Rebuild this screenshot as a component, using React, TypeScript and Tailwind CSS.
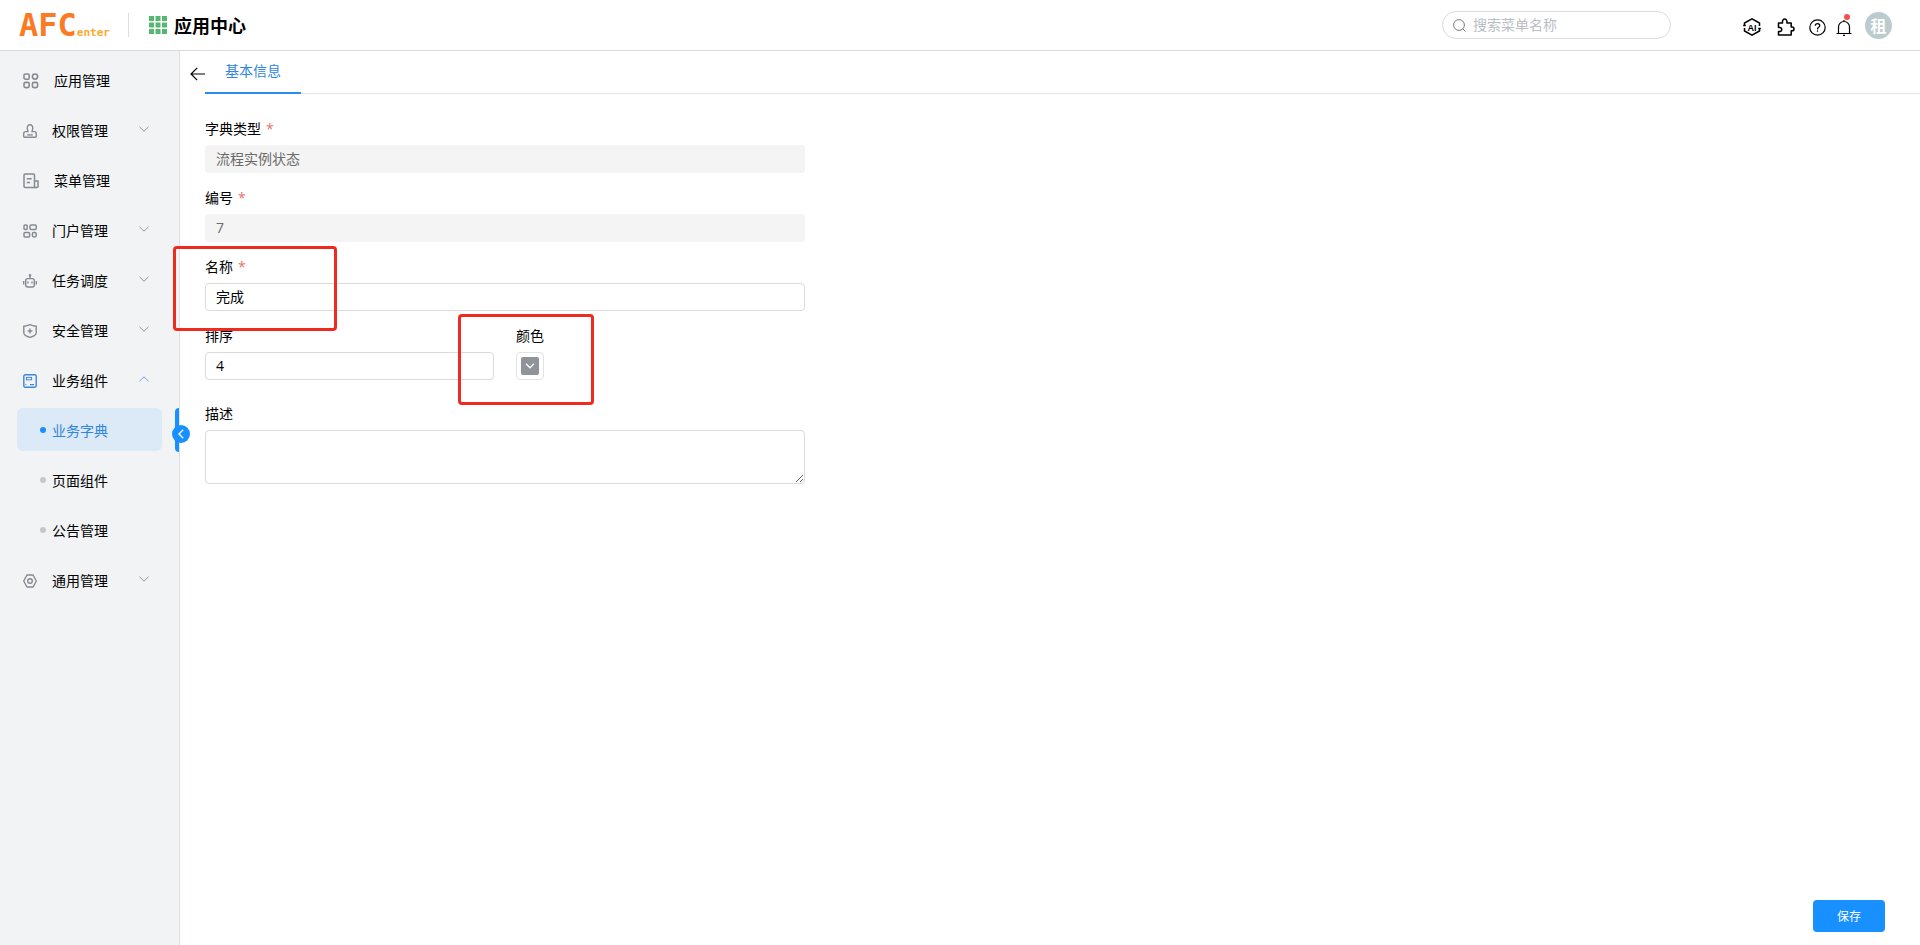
import type { ReactNode } from "react";

const outline = {
  fill: "none",
  stroke: "currentColor",
  strokeWidth: 1.3,
  "aria-hidden": true,
} as const;

function AppsIcon() {
  return (
    <svg width="16" height="16" viewBox="0 0 16 16" {...outline} strokeWidth={1.6}>
      <rect x="1" y="1" width="5.2" height="5.2" rx="1.4" />
      <rect x="9.4" y="1" width="5.2" height="5.2" rx="2.6" />
      <rect x="1" y="9.4" width="5.2" height="5.2" rx="1.6" />
      <rect x="9.4" y="9.4" width="5.2" height="5.2" rx="1.6" />
    </svg>
  );
}

function StampIcon() {
  return (
    <svg width="14" height="14" viewBox="0 0 14 14" {...outline} strokeWidth={1.4}>
      <path d="M5 7.6 4.3 4.8C3.900 2.400 5.200.8 7 .8s3.100 1.600 2.700 4L9 7.600h2.400c1.200 0 1.900.8 1.900 1.900v2.700c0 .7-.4 1.100-1.100 1.100H1.800c-.7 0-1.100-.4-1.100-1.100V9.500c0-1.100.7-1.900 1.900-1.900z" />
      <path d="M4.200 10.900h5.600" />
    </svg>
  );
}

function ListIcon() {
  return (
    <svg width="16" height="16" viewBox="0 0 16 16" {...outline} strokeWidth={1.5}>
      <path d="M11.500 14.500H2.200c-.8 0-1.200-.4-1.200-1.200V2.200C1 1.400 1.400 1 2.200 1h8.100c.8 0 1.200.4 1.200 1.200z" />
      <path d="M11.500 8H15v5.300c0 .8-.4 1.200-1.200 1.200h-2.300M3.700 5.800h5M3.700 9.600h3.400" />
    </svg>
  );
}

function PortalIcon() {
  return (
    <svg width="14" height="14" viewBox="0 0 14 14" {...outline} strokeWidth={1.5}>
      <rect x="1" y="1" width="3.200" height="4.400" rx="1" />
      <rect x="7" y="1" width="6.200" height="4.400" rx="1" />
      <rect x="1" y="8.600" width="5.600" height="4.400" rx="1" />
      <rect x="9.400" y="8.600" width="3.800" height="4.400" rx="1.400" />
    </svg>
  );
}

function RobotIcon() {
  return (
    <svg width="14" height="14" viewBox="0 0 14 14" {...outline} strokeWidth={1.4}>
      <rect x="2.700" y="4.600" width="8.600" height="8.400" rx="2" />
      <path d="M7 4.600V2M.7 7v3.600M13.300 7v3.600M5 7.600v1.800M9 7.600v1.800" />
      <circle cx="7" cy="1.300" r="1.200" fill="currentColor" stroke="none" />
    </svg>
  );
}

function ShieldIcon() {
  return (
    <svg width="14" height="14" viewBox="0 0 14 14" {...outline} strokeWidth={1.4}>
      <path d="M7 .7c1.900 1 3.900 1.400 6.200 1.500v6.600c0 2.200-2.500 3.600-6.200 4.600C3.300 12.400.8 11 .8 8.800V2.200C3.100 2.100 5.100 1.700 7 .7z" />
      <path d="M7 4.600v4.800M4.600 7h4.800" />
    </svg>
  );
}

function ComponentIcon() {
  return (
    <svg width="14" height="14" viewBox="0 0 14 14" {...outline} strokeWidth={1.400}>
      <rect x=".8" y=".8" width="12.400" height="12.400" rx="1.400" />
      <rect x="3.400" y="3.400" width="5.200" height="2.400" strokeWidth="1" />
      <path d="M7 10.600h4M2.400 10.600h1" />
    </svg>
  );
}

function NutIcon() {
  return (
    <svg width="14" height="14" viewBox="0 0 14 14" {...outline} strokeWidth={1.4}>
      <path d="M3.900 1h6.200l3.200 6-3.200 6H3.900L.7 7z" strokeLinejoin="round" />
      <circle cx="7" cy="7" r="2.300" />
    </svg>
  );
}

function Chevron({ up = false }: { up?: boolean }) {
  return (
    <svg
      width="10"
      height="6"
      viewBox="0 0 10 6"
      {...outline}
      strokeWidth={1}
      className={up ? "text-[#6fa3e8]" : "text-[#8f949b]"}
    >
      <path d={up ? "M.5 5.200 5 .8l4.500 4.400" : "M.5.8 5 5.200 9.500.8"} />
    </svg>
  );
}

type Item = {
  label: string;
  icon: ReactNode;
  state?: "open" | "closed";
  children?: string[];
};

const menu: Item[] = [
  { label: "应用管理", icon: <AppsIcon /> },
  { label: "权限管理", icon: <StampIcon />, state: "closed" },
  { label: "菜单管理", icon: <ListIcon /> },
  { label: "门户管理", icon: <PortalIcon />, state: "closed" },
  { label: "任务调度", icon: <RobotIcon />, state: "closed" },
  { label: "安全管理", icon: <ShieldIcon />, state: "closed" },
  {
    label: "业务组件",
    icon: <ComponentIcon />,
    state: "open",
    children: ["业务字典", "页面组件", "公告管理"],
  },
  { label: "通用管理", icon: <NutIcon />, state: "closed" },
];

const activeChild = "业务字典";

function Header() {
  return (
    <header className="flex h-[51px] shrink-0 items-center border-b border-[#d9dadc] bg-white pr-7 pl-[19px]">
      <a href="#home" className="flex items-baseline font-['DejaVu_Sans_Mono',monospace] leading-none font-bold">
        <span className="text-[32px] leading-8 text-[#fb7a24]">AFC</span>
        <span className="text-[11px] text-[#f9ab2e]">enter</span>
      </a>
      <span className="ml-[18px] h-6 w-px bg-[#dcdde1]" />
      <svg width="18" height="18" viewBox="0 0 18 18" fill="#55b871" className="ml-5" aria-hidden>
        {[0, 6.500, 13].map((y) =>
          [0, 6.500, 13].map((x) => <rect key={`${x}-${y}`} x={x} y={y} width="5" height="5" />),
        )}
      </svg>
      <h1 className="ml-[7px] pt-px text-lg font-bold text-black">应用中心</h1>

      <label className="ml-auto flex h-7 w-[229px] items-center gap-[7px] rounded-full border border-[#d9dadd] px-2.5">
        <svg width="13" height="13" viewBox="0 0 13 13" {...outline} strokeWidth={1} className="shrink-0 text-[#777c84]">
          <circle cx="6" cy="6" r="5.400" />
          <path d="m9.800 9.800 2.700 2.700" />
        </svg>
        <input
          type="search"
          aria-label="搜索菜单名称"
          placeholder="搜索菜单名称"
          className="w-full min-w-0 text-sm outline-none placeholder:text-[#b9bdc5]"
        />
      </label>

      <nav className="ml-[72px] flex items-center pt-1 text-black">
        <button type="button" aria-label="AI">
          <svg width="18" height="18" viewBox="0 0 18 18" {...outline} strokeWidth={1.500}>
            <path d="M1.500 7.500V5L9 .9 16.500 5v3M16.500 10.500V13L9 17.100 1.500 13v-3" />
            <path d="M.2 7.500h2.600M15.200 10.500h2.600" />
            <text
              x="9"
              y="12.500"
              textAnchor="middle"
              fontSize="9"
              fontWeight="700"
              fontFamily="Liberation Sans, sans-serif"
              fill="currentColor"
              stroke="none"
            >
              AI
            </text>
          </svg>
        </button>
        <button type="button" aria-label="插件" className="ml-4">
          <svg width="18" height="18" viewBox="0 0 18 18" {...outline} strokeWidth={1.500}>
            <path
              strokeLinejoin="round"
              d="M1.500 5h4V3.300a2.200 2.200 0 1 1 4.400 0V5h4.300v4h.9a1.900 1.900 0 1 1 0 3.800h-.9V17H1.500v-3.400h1.200a2 2 0 1 0 0-4H1.500z"
            />
          </svg>
        </button>
        <button type="button" aria-label="帮助" className="ml-3.5">
          <svg width="17" height="17" viewBox="0 0 17 17" {...outline} strokeWidth={1.200}>
            <circle cx="8.500" cy="8.500" r="7.700" />
            <path d="M6.200 6.800c0-1.300 1-2.200 2.300-2.200s2.300.9 2.300 2.100c0 1.600-2.300 1.700-2.300 3.300v.4M8.500 11.600v1.200" />
          </svg>
        </button>
        <button type="button" aria-label="通知" className="relative ml-2.5 pt-px">
          <svg width="16" height="17" viewBox="0 0 16 17" {...outline} strokeWidth={1.200}>
            <path d="M.5 14.500h15M2.500 14.500V8a5.500 5.500 0 0 1 11 0v6.500M8 1v1.500M7 16.400h2" />
          </svg>
          <span className="absolute -top-1 right-0.5 size-1.5 rounded-full bg-[#f5504e]" />
        </button>
      </nav>
      <button
        type="button"
        className="ml-[13px] flex size-[27px] items-center justify-center rounded-full bg-[#bccbcd] pt-px text-base font-bold text-white"
      >
        租
      </button>
    </header>
  );
}

function Sidebar() {
  return (
    <aside className="relative w-[180px] shrink-0 border-r border-[#dfe0e3] bg-[#f1f3f5] px-[17px] pt-[7px]">
      <ul className="flex flex-col gap-[7px] text-sm text-black">
        {menu.map((item) => (
          <li key={item.label} className="flex flex-col gap-[7px]">
            <a href="#menu" className="flex h-[43px] items-center pt-[3px] pr-[13px] pl-1.5">
              <span className={item.state === "open" ? "text-[#3f86dd]" : "text-[#868b91]"}>{item.icon}</span>
              <span className="ml-[15px]">{item.label}</span>
              {item.state && (
                <span className="mb-1 ml-auto">
                  <Chevron up={item.state === "open"} />
                </span>
              )}
            </a>
            {item.children && (
              <ul className="flex flex-col gap-[7px]">
                {item.children.map((child) => {
                  const active = child === activeChild;
                  return (
                    <li key={child}>
                      <a
                        href="#menu"
                        className={
                          active
                            ? "flex h-[43px] items-center gap-1.5 rounded-md bg-[#dce9f6] pt-[3px] pl-[23px] text-[#2f86e0]"
                            : "flex h-[43px] items-center gap-1.5 pt-[3px] pl-[23px]"
                        }
                      >
                        <span
                          className={
                            active
                              ? "mb-0.5 size-1.5 rounded-full bg-[#1890ff]"
                              : "mb-0.5 size-1.5 rounded-full bg-[#c6c7c9]"
                          }
                        />
                        {child}
                      </a>
                    </li>
                  );
                })}
              </ul>
            )}
          </li>
        ))}
      </ul>
      <span className="absolute top-[357px] right-0 h-11 w-1 rounded-l bg-[#1890ff]" />
      <button
        type="button"
        aria-label="收起菜单"
        className="absolute top-[374px] -right-[11px] z-10 flex size-[18px] items-center justify-center rounded-full bg-[#1890ff] text-white"
      >
        <svg width="6" height="10" viewBox="0 0 6 10" {...outline}>
          <path d="M5.200.8 1 5l4.200 4.200" />
        </svg>
      </button>
    </aside>
  );
}

const labelClass = "flex h-8 items-center gap-[5px] text-sm text-black";
const boxClass = "h-7 w-full rounded border border-[#d9dadc] bg-white px-2.5 pb-0.5 text-sm text-black outline-none";
const readOnlyClass = "h-7 w-full rounded bg-[#f4f4f4] px-[11px] pb-0.5 text-sm text-[#6b6b6b] outline-none";

function Required() {
  return <span className="text-[#e8706c]">*</span>;
}

function DictionaryForm() {
  return (
    <form className="flex w-[600px] max-w-full flex-col gap-[9px]">
      <div>
        <label htmlFor="type" className={labelClass}>
          字典类型 <Required />
        </label>
        <input id="type" readOnly value="流程实例状态" className={readOnlyClass} />
      </div>
      <div>
        <label htmlFor="code" className={labelClass}>
          编号 <Required />
        </label>
        <input id="code" readOnly value="7" className={readOnlyClass} />
      </div>
      <div className="relative">
        <label htmlFor="name" className={labelClass}>
          名称 <Required />
        </label>
        <input id="name" defaultValue="完成" className={boxClass} />
        <span className="pointer-events-none absolute -top-[5px] -left-8 z-10 h-[85px] w-[164px] rounded-sm border-[3px] border-[#ee2b20]" />
      </div>
      <div className="flex gap-[22px]">
        <div className="w-[289px]">
          <label htmlFor="order" className={labelClass}>
            排序
          </label>
          <input id="order" defaultValue="4" className={boxClass} />
        </div>
        <div className="relative">
          <label htmlFor="color" className={labelClass}>
            颜色
          </label>
          <button
            id="color"
            type="button"
            className="flex size-7 items-center justify-center rounded border border-[#e2e3e5] bg-white"
          >
            <span className="flex size-[18px] items-center justify-center rounded-xs bg-[#909399] text-white">
              <svg width="10" height="6" viewBox="0 0 10 6" {...outline}>
                <path d="M1 .8 5 4.800 9 .8" />
              </svg>
            </span>
          </button>
          <span className="pointer-events-none absolute -top-1.5 -left-[58px] z-10 h-[91px] w-[136px] rounded-sm border-[3px] border-[#ee2b20]" />
        </div>
      </div>
      <div className="pt-[9px]">
        <label htmlFor="description" className={labelClass}>
          描述
        </label>
        <textarea
          id="description"
          className="block h-[54px] w-full resize-y rounded border border-[#d9dadc] px-2.5 py-1 text-sm outline-none"
        />
      </div>
    </form>
  );
}

export default function App() {
  return (
    <div className="flex min-h-screen flex-col bg-white font-['Open_Sans','Noto_Sans_CJK_SC',sans-serif]">
      <Header />
      <div className="flex flex-1">
        <Sidebar />
        <main className="flex min-w-0 flex-1 flex-col">
          <div className="flex h-[43px]">
            <button type="button" aria-label="返回" className="flex w-[25px] items-center justify-end pt-0.5 text-black">
              <svg width="15" height="14" viewBox="0 0 15 14" {...outline} strokeWidth={1.200}>
                <path d="M15 7H1M7.200.8 1 7l6.200 6.200" />
              </svg>
            </button>
            <div role="tablist" className="flex flex-1 border-b border-[#e1e3e6]">
              <button
                type="button"
                role="tab"
                aria-selected="true"
                className="-mb-px border-b-2 border-[#2d8cf0] px-5 pb-0.5 text-sm text-[#2f86e0]"
              >
                基本信息
              </button>
            </div>
          </div>
          <div className="px-[25px] pt-[19px]">
            <DictionaryForm />
          </div>
          <div className="mt-auto flex justify-end pr-[35px] pb-[13px]">
            <button type="button" className="h-8 w-[72px] rounded bg-[#1890ff] pt-0.5 text-xs text-white">
              保存
            </button>
          </div>
        </main>
      </div>
    </div>
  );
}
